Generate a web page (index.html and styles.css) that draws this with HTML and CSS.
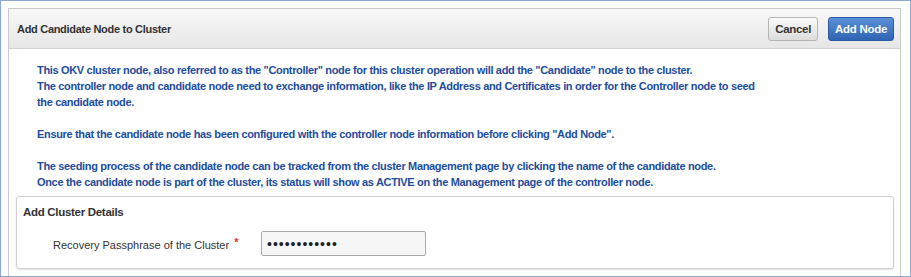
FILE: index.html
```html
<!DOCTYPE html>
<html lang="en">
<head>
    <meta charset="UTF-8">
    <title>Add Candidate Node to Cluster</title>
    <link rel="stylesheet" href="styles.css">
</head>
<body>
    <div class="frame">
        <div class="panel">
            <div class="panel-header">
                <h1 class="panel-title">Add Candidate Node to Cluster</h1>
                <div class="actions">
                    <button class="btn btn-cancel">Cancel</button>
                    <button class="btn btn-primary">Add Node</button>
                </div>
            </div>

            <div class="panel-body">
                <p class="info">
                    This OKV cluster node, also referred to as the "Controller" node for this cluster operation will add the "Candidate" node to the cluster.<br>
                    The controller node and candidate node need to exchange information, like the IP Address and Certificates in order for the Controller node to seed<br>
                    the candidate node.<br>
                    <br>
                    Ensure that the candidate node has been configured with the controller node information before clicking "Add Node".<br>
                    <br>
                    The seeding process of the candidate node can be tracked from the cluster Management page by clicking the name of the candidate node.<br>
                    Once the candidate node is part of the cluster, its status will show as ACTIVE on the Management page of the controller node.
                </p>

                <div class="details">
                    <h2 class="details-title">Add Cluster Details</h2>
                    <div class="field">
                        <label class="field-label" for="passphrase">Recovery Passphrase of the Cluster <span class="req">*</span></label>
                        <input class="field-input" id="passphrase" type="password" value="abcdefghijkl">
                    </div>
                </div>
            </div>
        </div>
    </div>
</body>
</html>
```

FILE: styles.css
```css
body {
    margin: 0;
    font-family: "Liberation Sans", Arial, sans-serif;
    font-size: 11px;
    color: #333;
    background: #fff;
}

.frame {
    box-sizing: border-box;
    width: 911px;
    height: 277px;
    border: 1px solid #8ea8d6;
    padding: 7px 9px 0 7px;
    overflow: hidden;
}

.panel {
    border: 1px solid #cacaca;
    height: 400px;
    background: #fff;
}

.panel-header {
    display: flex;
    justify-content: space-between;
    align-items: center;
    height: 39px;
    padding: 0 6px 0 8px;
    border-bottom: 1px solid #d2d2d2;
    background: linear-gradient(#f8f8f8, #e6e6e6);
}

.panel-title {
    margin: 0;
    font-size: 11px;
    font-weight: bold;
    letter-spacing: -0.3px;
    color: #333;
}

.actions {
    display: flex;
    gap: 10px;
    margin-top: 1px;
}

.btn {
    height: 24px;
    padding: 0 6px;
    font-family: inherit;
    font-size: 11.5px;
    font-weight: bold;
    letter-spacing: -0.3px;
    border-radius: 3px;
    cursor: pointer;
}

.btn-cancel {
    color: #333;
    border: 1px solid #b5b5b5;
    background: linear-gradient(#fafafa, #dcdcdc);
}

.btn-primary {
    color: #fff;
    border: 1px solid #2a5aa5;
    background: linear-gradient(#5b8fd6, #2f64b4);
}

.panel-body {
    padding: 13px 6px 0 7px;
}

.info {
    margin: 0 0 6px 21px;
    line-height: 16px;
    font-size: 11px;
    font-weight: bold;
    letter-spacing: -0.33px;
    color: #1e4d9c;
}

.details {
    border: 1px solid #d0d0d0;
    border-radius: 3px;
    box-shadow: 0 1px 2px rgba(0, 0, 0, 0.12);
    padding: 7px 6px 12px;
}

.details-title {
    margin: 0;
    font-size: 11.5px;
    line-height: 16px;
    font-weight: bold;
    letter-spacing: -0.3px;
    color: #333;
}

.field {
    display: flex;
    align-items: center;
    margin-top: 11px;
    padding-left: 30px;
}

.field-label {
    width: 208px;
    font-size: 11px;
    color: #333;
}

.req {
    color: #e0302a;
    font-weight: bold;
    vertical-align: 3px;
    margin-left: 2px;
}

.field-input {
    box-sizing: border-box;
    width: 165px;
    height: 25px;
    padding: 0 5px;
    border: 1px solid #a9a9a9;
    border-radius: 2px;
    background: #f6f6f6;
    font-size: 14px;
    letter-spacing: 1px;
    color: #222;
}
```
